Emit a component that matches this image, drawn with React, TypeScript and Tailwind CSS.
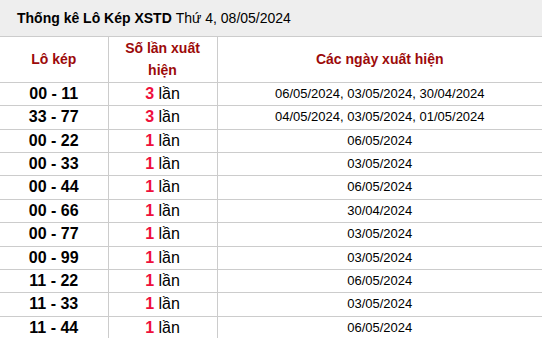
import React from 'react';

interface LoKepRow {
  pair: string;
  count: number;
  dates: string[];
}

const rows: LoKepRow[] = [
  { pair: '00 - 11', count: 3, dates: ['06/05/2024', '03/05/2024', '30/04/2024'] },
  { pair: '33 - 77', count: 3, dates: ['04/05/2024', '03/05/2024', '01/05/2024'] },
  { pair: '00 - 22', count: 1, dates: ['06/05/2024'] },
  { pair: '00 - 33', count: 1, dates: ['03/05/2024'] },
  { pair: '00 - 44', count: 1, dates: ['06/05/2024'] },
  { pair: '00 - 66', count: 1, dates: ['30/04/2024'] },
  { pair: '00 - 77', count: 1, dates: ['03/05/2024'] },
  { pair: '00 - 99', count: 1, dates: ['03/05/2024'] },
  { pair: '11 - 22', count: 1, dates: ['06/05/2024'] },
  { pair: '11 - 33', count: 1, dates: ['03/05/2024'] },
  { pair: '11 - 44', count: 1, dates: ['06/05/2024'] },
];

export default function App() {
  return (
    <div className="w-[542px] h-[338px] overflow-hidden bg-white font-['Liberation_Sans',Arial,sans-serif] text-black">
      <div className="h-[37px] bg-[#eeeeee] border-b border-[#cccccc] pl-[17px] flex items-center text-[14px]">
        <span className="font-bold">Thống kê Lô Kép XSTD</span>
        <span>&nbsp;Thứ 4, 08/05/2024</span>
      </div>
      <table className="w-full border-collapse table-fixed leading-[1.4]">
        <colgroup>
          <col className="w-[108px]" />
          <col className="w-[109px]" />
          <col />
        </colgroup>
        <thead>
          <tr className="text-[14px] font-bold text-[#9c0a0a]">
            <th className="border-b border-r border-[#cccccc] h-[45px] px-2 font-bold">Lô kép</th>
            <th className="border-b border-r border-[#cccccc] px-2 font-bold leading-[22.4px]">Số lần xuất hiện</th>
            <th className="border-b border-[#cccccc] px-2 font-bold">Các ngày xuất hiện</th>
          </tr>
        </thead>
        <tbody>
          {rows.map((row) => (
            <tr key={row.pair} className="h-[23.4px]">
              <td className="border-b border-r border-[#cccccc] text-center text-[16px] font-bold p-0">{row.pair}</td>
              <td className="border-b border-r border-[#cccccc] text-center text-[16px] p-0">
                <span className="font-bold text-[#ee0f3c]">{row.count}</span> lần
              </td>
              <td className="border-b border-[#cccccc] text-center text-[13px] p-0">{row.dates.join(', ')}</td>
            </tr>
          ))}
        </tbody>
      </table>
    </div>
  );
}
